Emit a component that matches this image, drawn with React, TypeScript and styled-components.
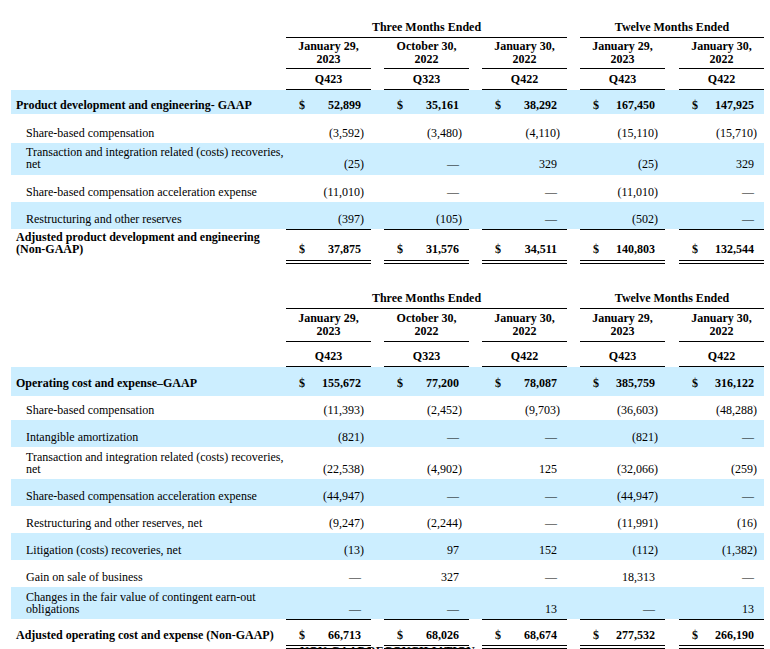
import React from "react";
import styled, { createGlobalStyle } from "styled-components";

const GlobalStyle = createGlobalStyle`
  body {
    margin: 0;
    background: #fff;
    color: #000;
    font-family: "Liberation Serif", "Times New Roman", serif;
    font-size: 12px;
  }
`;

const COLS = "275px 85px 98px 98px 98px 99px";
const SHADE = "#cceeff";

type Line = {
  label: string;
  values: string[];
  h: number;
  pb?: number;
  bold?: boolean;
  shade?: boolean;
};

type TableData = {
  top: number;
  datePad: [number, number];
  qPad: [number, number];
  lines: Line[];
  total: { label: string; values: string[]; h: number; pb: number };
};

const dates = [
  ["January 29,", "2023", "Q423"],
  ["October 30,", "2022", "Q323"],
  ["January 30,", "2022", "Q422"],
  ["January 29,", "2023", "Q423"],
  ["January 30,", "2022", "Q422"],
];

const tables: TableData[] = [
  {
    top: 0,
    datePad: [2, 2],
    qPad: [4, 4],
    lines: [
      { label: "Product development and engineering- GAAP", bold: true, shade: true, h: 24, pb: 3, values: ["$52,899", "$35,161", "$38,292", "$167,450", "$147,925"] },
      { label: "Share-based compensation", h: 29, values: ["(3,592)", "(3,480)", "(4,110)", "(15,110)", "(15,710)"] },
      { label: "Transaction and integration related (costs) recoveries, net", shade: true, h: 32, pb: 5, values: ["(25)", "—", "329", "(25)", "329"] },
      { label: "Share-based compensation acceleration expense", h: 27, values: ["(11,010)", "—", "—", "(11,010)", "—"] },
      { label: "Restructuring and other reserves", shade: true, h: 27, values: ["(397)", "(105)", "—", "(502)", "—"] },
    ],
    total: { label: "Adjusted product development and engineering (Non-GAAP)", h: 35, pb: 9, values: ["$37,875", "$31,576", "$34,511", "$140,803", "$132,544"] },
  },
  {
    top: 27,
    datePad: [3, 3],
    qPad: [8, 4],
    lines: [
      { label: "Operating cost and expense–GAAP", bold: true, shade: true, h: 29, pb: 7, values: ["$155,672", "$77,200", "$78,087", "$385,759", "$316,122"] },
      { label: "Share-based compensation", h: 24, values: ["(11,393)", "(2,452)", "(9,703)", "(36,603)", "(48,288)"] },
      { label: "Intangible amortization", shade: true, h: 27, values: ["(821)", "—", "—", "(821)", "—"] },
      { label: "Transaction and integration related (costs) recoveries, net", h: 32, values: ["(22,538)", "(4,902)", "125", "(32,066)", "(259)"] },
      { label: "Share-based compensation acceleration expense", shade: true, h: 27, values: ["(44,947)", "—", "—", "(44,947)", "—"] },
      { label: "Restructuring and other reserves, net", h: 27, values: ["(9,247)", "(2,244)", "—", "(11,991)", "(16)"] },
      { label: "Litigation (costs) recoveries, net", shade: true, h: 27, values: ["(13)", "97", "152", "(112)", "(1,382)"] },
      { label: "Gain on sale of business", h: 27, values: ["—", "327", "—", "18,313", "—"] },
      { label: "Changes in the fair value of contingent earn-out obligations", shade: true, h: 32, values: ["—", "—", "13", "—", "13"] },
    ],
    total: { label: "Adjusted operating cost and expense (Non-GAAP)", h: 30, pb: 8, values: ["$66,713", "$68,026", "$68,674", "$277,532", "$266,190"] },
  },
];

const Page = styled.div`
  width: 753px;
  padding: 20px 0 0 11px;
`;

const Table = styled.section<{ $top: number }>`
  margin-top: ${(p) => p.$top}px;
`;

const GroupRow = styled.div`
  display: grid;
  grid-template-columns: ${COLS};
  font-weight: bold;
  line-height: 14px;
`;

const GroupHead = styled.div<{ $span: string; $indent?: number }>`
  grid-column: ${(p) => p.$span};
  margin-left: ${(p) => p.$indent ?? 0}px;
  text-align: center;
  padding-bottom: 3px;
  border-bottom: 1px solid #000;
`;

const HeadRow = styled.div<{ $lh: number }>`
  display: grid;
  grid-template-columns: ${COLS};
  font-weight: bold;
  line-height: ${(p) => p.$lh}px;

  & > :first-child {
    grid-column-start: 2;
  }
`;

const HeadCell = styled.div<{ $pt: number; $pb: number }>`
  justify-self: end;
  width: 85px;
  text-align: center;
  padding: ${(p) => p.$pt}px 0 ${(p) => p.$pb}px;
  border-bottom: 1px solid #000;
`;

const Row = styled.div<{ $h: number; $shade?: boolean; $bold?: boolean }>`
  display: grid;
  grid-template-columns: ${COLS};
  align-items: end;
  min-height: ${(p) => p.$h}px;
  background: ${(p) => (p.$shade ? SHADE : "transparent")};
  font-weight: ${(p) => (p.$bold ? "bold" : "normal")};
  line-height: 12px;
`;

const Label = styled.div<{ $indent: number; $pb: number }>`
  padding: 0 0 ${(p) => p.$pb}px ${(p) => p.$indent}px;
`;

const Value = styled.div<{ $pb: number; $dollar: boolean; $total?: boolean }>`
  justify-self: end;
  align-self: ${(p) => (p.$total ? "stretch" : "end")};
  box-sizing: border-box;
  width: 85px;
  display: flex;
  align-items: flex-end;
  justify-content: ${(p) => (p.$dollar ? "space-between" : "flex-end")};
  padding: 0 10px ${(p) => p.$pb}px 13px;
  border-top: ${(p) => (p.$total ? "1px solid #000" : "none")};
  border-bottom: ${(p) => (p.$total ? "4px double #000" : "none")};
  white-space: nowrap;
`;

const Paren = styled.span`
  margin-right: -3px;
`;

const Footer = styled.div`
  margin-top: -5px;
  text-align: center;
  font-weight: bold;
  font-size: 12px;
  line-height: 14px;
  text-decoration: underline;
`;

const Amount = ({ v }: { v: string }) => {
  const dollar = v.startsWith("$");
  const s = dollar ? v.slice(1) : v;
  const neg = s.startsWith("(");
  return (
    <>
      {dollar && <span>$</span>}
      <span>
        {neg ? s.slice(0, -1) : s}
        {neg && <Paren>)</Paren>}
      </span>
    </>
  );
};

const DataTable = ({ t }: { t: TableData }) => (
  <Table $top={t.top}>
    <GroupRow>
      <GroupHead $span="2 / 5">Three Months Ended</GroupHead>
      <GroupHead $span="5 / 7" $indent={13}>
        Twelve Months Ended
      </GroupHead>
    </GroupRow>
    <HeadRow $lh={13}>
      {dates.map((d, i) => (
        <HeadCell key={i} $pt={t.datePad[0]} $pb={t.datePad[1]}>
          {d[0]}
          <br />
          {d[1]}
        </HeadCell>
      ))}
    </HeadRow>
    <HeadRow $lh={12}>
      {dates.map((d, i) => (
        <HeadCell key={i} $pt={t.qPad[0]} $pb={t.qPad[1]}>
          {d[2]}
        </HeadCell>
      ))}
    </HeadRow>
    {t.lines.map((l, i) => {
      const pb = l.pb ?? 4;
      return (
        <Row key={i} $h={l.h} $shade={l.shade} $bold={l.bold}>
          <Label $indent={l.bold ? 5 : 15} $pb={pb}>
            {l.label}
          </Label>
          {l.values.map((v, j) => (
            <Value key={j} $pb={pb} $dollar={v.startsWith("$")}>
              <Amount v={v} />
            </Value>
          ))}
        </Row>
      );
    })}
    <Row $h={t.total.h} $bold>
      <Label $indent={5} $pb={t.total.pb}>
        {t.total.label}
      </Label>
      {t.total.values.map((v, j) => (
        <Value key={j} $pb={t.total.pb - 4} $dollar $total>
          <Amount v={v} />
        </Value>
      ))}
    </Row>
  </Table>
);

export default function App() {
  return (
    <>
      <GlobalStyle />
      <Page>
        {tables.map((t, i) => (
          <DataTable key={i} t={t} />
        ))}
        <Footer>NON-GAAP RECONCILIATION</Footer>
      </Page>
    </>
  );
}
